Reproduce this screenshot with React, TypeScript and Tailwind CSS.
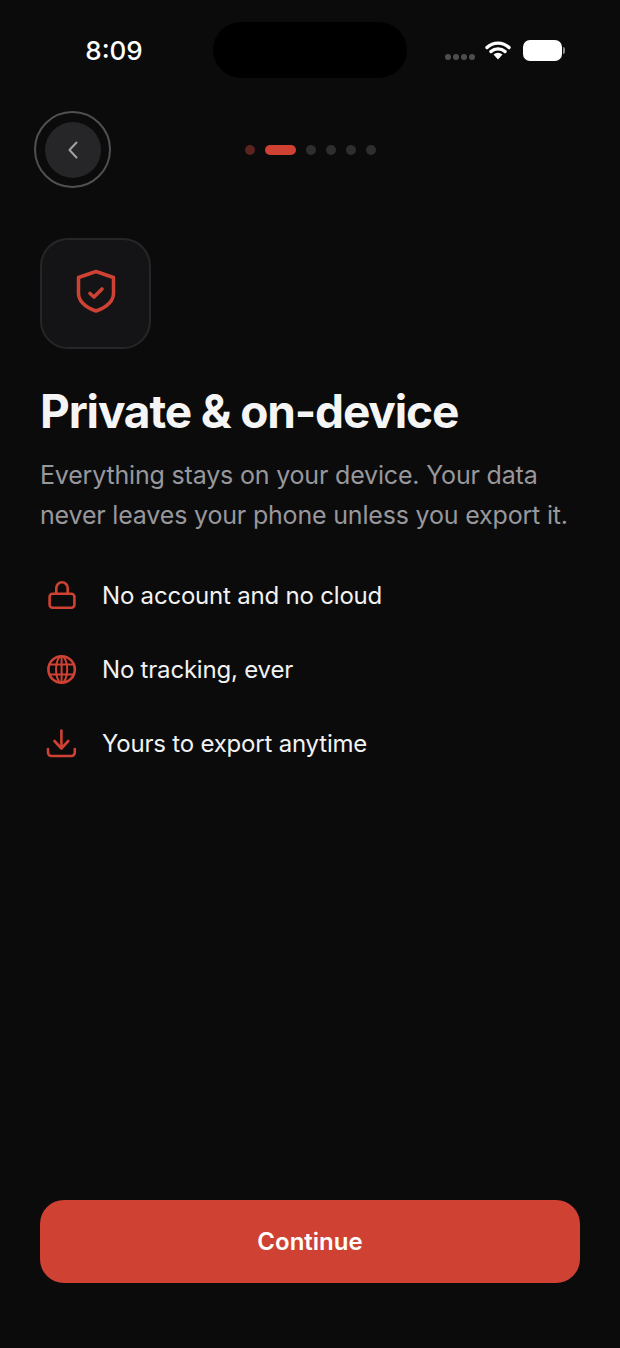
import type { ReactNode } from 'react';

const RED = '#cf4233';

function RowIcon({ children }: { children: ReactNode }) {
  return (
    <svg width="32" height="32" viewBox="0 0 32 32" fill="none" stroke={RED} strokeWidth="2.6" strokeLinecap="round" strokeLinejoin="round">
      {children}
    </svg>
  );
}

const rows = [
  {
    label: 'No account and no cloud',
    icon: (
      <RowIcon>
        <rect x="3.6" y="13.8" width="24.8" height="14" rx="3" />
        <path d="M10.3 13.500V8a5.700 5.700 0 0 1 11.400 0v5.500" />
      </RowIcon>
    ),
  },
  {
    label: 'No tracking, ever',
    icon: (
      <RowIcon>
        <circle cx="15.6" cy="15.5" r="13.2" />
        <ellipse cx="15.6" cy="15.5" rx="5.6" ry="13.2" strokeWidth="2" />
        <path d="M15.600 2.500v26M3.500 10.500h24.200M3.500 20.500h24.200" strokeWidth="2" strokeLinecap="butt" />
      </RowIcon>
    ),
  },
  {
    label: 'Yours to export anytime',
    icon: (
      <RowIcon>
        <path d="M15.400 2.500v18M8.500 13l6.900 7.500 6.900-7.500" />
        <path d="M2 21V24.500a3.500 3.500 0 0 0 3.500 3.500h19.800a3.500 3.500 0 0 0 3.500-3.500V21" />
      </RowIcon>
    ),
  },
];

export default function App() {
  return (
    <div className="flex h-[1348px] w-[620px] flex-col bg-[#0b0b0c] font-['Inter',sans-serif] text-white">
      {/* status bar */}
      <div className="grid h-[78px] shrink-0 grid-cols-[1fr_194px_1fr] pt-[22px]">
        <div className="flex items-center justify-center pl-[15px] text-[26px] font-medium">8:09</div>
        <div className="rounded-[28px] bg-black" />
        <div className="flex items-center pl-[38px]">
          <div className="mt-[13px] flex gap-[2px]">
            <span className="h-[6px] w-[6px] rounded-full bg-[#4e4e50]" />
            <span className="h-[6px] w-[6px] rounded-full bg-[#4e4e50]" />
            <span className="h-[6px] w-[6px] rounded-full bg-[#4e4e50]" />
            <span className="h-[6px] w-[6px] rounded-full bg-[#4e4e50]" />
          </div>
          <svg className="ml-[10px]" width="26" height="20" viewBox="0 0 26 20" fill="none">
            <path d="M2 7.500a16 16 0 0 1 22 0M6 11.500a10.500 10.500 0 0 1 14 0" stroke="white" strokeWidth="3.4" strokeLinecap="round" />
            <path d="M8.500 14.500a6.500 6.500 0 0 1 9 0L13 19.500z" fill="white" />
          </svg>
          <div className="ml-[12px] h-[21px] w-[39px] rounded-[7px] bg-white" />
          <div className="ml-[1px] h-[7px] w-[2px] rounded-r-full bg-[#8a8a8a]" />
        </div>
      </div>

      {/* back button and progress */}
      <div className="relative mt-[33px] h-[77px] shrink-0 pl-[34px]">
        <div className="flex h-[77px] w-[77px] items-center justify-center rounded-full border-2 border-[#505053]">
          <div className="flex h-[56px] w-[56px] items-center justify-center rounded-full bg-[#262628]">
            <svg width="14" height="20" viewBox="0 0 14 20" fill="none">
              <path d="M10.500 2.500L3.500 10l7 7.500" stroke="#a2a2a5" strokeWidth="2" strokeLinecap="round" strokeLinejoin="round" />
            </svg>
          </div>
        </div>
        <div className="absolute inset-x-0 top-[34px] flex justify-center gap-[10px]">
          <span className="h-[10px] w-[10px] rounded-full bg-[#5c221d]" />
          <span className="h-[10px] w-[31px] rounded-full bg-[#cf4233]" />
          <span className="h-[10px] w-[10px] rounded-full bg-[#2e2e30]" />
          <span className="h-[10px] w-[10px] rounded-full bg-[#2e2e30]" />
          <span className="h-[10px] w-[10px] rounded-full bg-[#2e2e30]" />
          <span className="h-[10px] w-[10px] rounded-full bg-[#2e2e30]" />
        </div>
      </div>

      <div className="flex flex-1 flex-col px-[40px]">
        <div className="mt-[50px] flex h-[111px] w-[111px] items-center justify-center rounded-[28px] border-2 border-[#262628] bg-[#141416]">
          <svg className="mb-[6px]" width="40" height="44" viewBox="0 0 40 44" fill="none" stroke={RED} strokeWidth="3.5" strokeLinecap="round" strokeLinejoin="round">
            <path d="M20 2.500L37.500 8.500V24c0 8.500-7.500 14.500-17.500 18C10 38.500 2.500 32.500 2.500 24V8.500z" />
            <path d="M14 24.500l4 3.500 8-8" strokeWidth="3.6" />
          </svg>
        </div>

        <h1 className="mt-[32px] text-[46px] leading-[60px] font-bold tracking-[-1.15px] text-[#f5f5f5]">Private &amp; on-device</h1>
        <p className="mt-[14px] whitespace-nowrap text-[25px] leading-[40px] tracking-[-0.18px] text-[#98989c]">
          Everything stays on your device. Your data
          <br />
          never leaves your phone unless you export it.
        </p>

        <div className="mt-[41px] flex flex-col gap-[34px]">
          {rows.map((row) => (
            <div key={row.label} className="flex h-[40px] items-center gap-[24px] pl-[6px]">
              {row.icon}
              <span className="text-[24px] font-normal tracking-[-0.2px] text-[#f2f2f2]">{row.label}</span>
            </div>
          ))}
        </div>

        <button className="mt-auto mb-[65px] h-[83px] w-[540px] rounded-[24px] bg-[#cf4233] text-[24px] font-semibold text-white">
          Continue
        </button>
      </div>
    </div>
  );
}
